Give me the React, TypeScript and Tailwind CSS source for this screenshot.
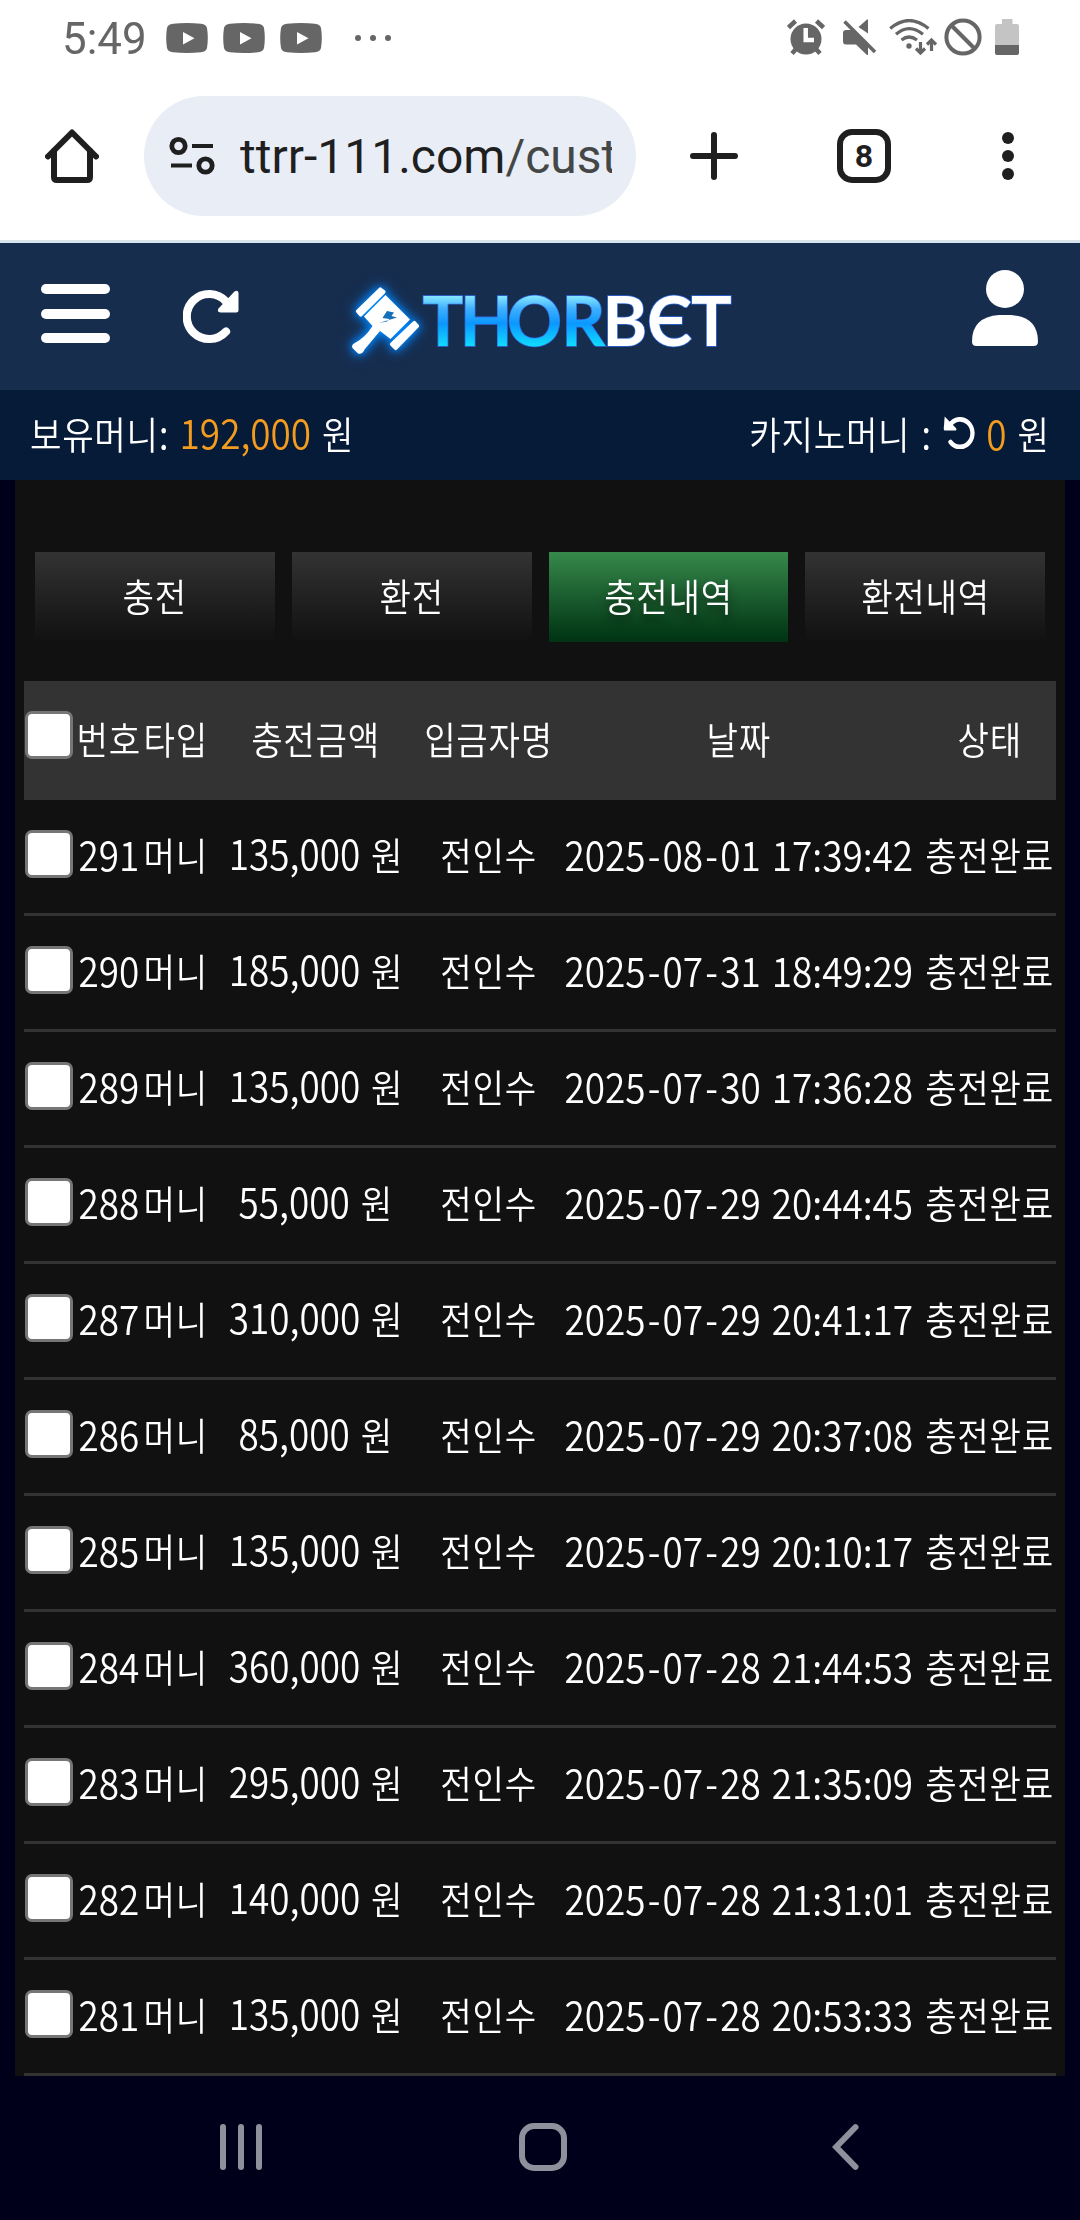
import { clsx } from "clsx";

const tabs = [
  { label: "충전", active: false },
  { label: "환전", active: false },
  { label: "충전내역", active: true },
  { label: "환전내역", active: false },
];

const columns = ["번호", "타입", "충전금액", "입금자명", "날짜", "상태"];

const deposits = [
  { no: 291, amount: "135,000", date: "2025-08-01 17:39:42" },
  { no: 290, amount: "185,000", date: "2025-07-31 18:49:29" },
  { no: 289, amount: "135,000", date: "2025-07-30 17:36:28" },
  { no: 288, amount: "55,000", date: "2025-07-29 20:44:45" },
  { no: 287, amount: "310,000", date: "2025-07-29 20:41:17" },
  { no: 286, amount: "85,000", date: "2025-07-29 20:37:08" },
  { no: 285, amount: "135,000", date: "2025-07-29 20:10:17" },
  { no: 284, amount: "360,000", date: "2025-07-28 21:44:53" },
  { no: 283, amount: "295,000", date: "2025-07-28 21:35:09" },
  { no: 282, amount: "140,000", date: "2025-07-28 21:31:01" },
  { no: 281, amount: "135,000", date: "2025-07-28 20:53:33" },
];

const rowGrid =
  "grid grid-cols-[50px_67px_67px_214px_132px_368px_134px] items-center";

// Condensed label: digits are a little larger than the Hangul next to them
function Label({ text, className }: { text: string; className?: string }) {
  const parts = text.split(/([가-힣]+|-)/).filter(Boolean);
  return (
    <span
      className={clsx(
        "inline-block whitespace-pre text-[41px] leading-[48px] [word-spacing:3px]",
        className
      )}
    >
      {parts.map((part, i) => {
        if (part === "-") {
          return (
            <span key={i} className="px-[2.5px]">
              -
            </span>
          );
        }
        if (/[가-힣]/.test(part)) {
          return (
            <span key={i} className="text-[38px] tracking-[0.8px]">
              {part}
            </span>
          );
        }
        return part;
      })}
    </span>
  );
}

function Cell({ text }: { text: string }) {
  return (
    <div className="flex min-w-0 justify-center pb-[7px] pl-[2px]">
      <Label text={text} className="scale-x-90" />
    </div>
  );
}

function Checkbox() {
  return (
    <input
      type="checkbox"
      className="ml-px block size-12 appearance-none rounded-[7px] border-[3px] border-[#767676] bg-white"
    />
  );
}

function VideoIcon() {
  return (
    <svg width="42" height="30" viewBox="0 0 42 30">
      <path
        d="M7 .8Q21-.6 35 .8Q40 1.2 41 5Q42.6 15 41 25Q40 28.8 35 29.2Q21 30.6 7 29.2Q2 28.8 1 25Q-.6 15 1 5Q2 1.2 7 .8Z"
        fill="#666"
      />
      <path d="M17 9v12.500l11.500-6.250z" fill="#fff" />
    </svg>
  );
}

function StatusBar() {
  return (
    <div className="flex h-[76px] items-center pr-[61px] pl-[62px]">
      <span className="w-[104px] origin-left scale-x-[0.975] font-[Roboto] text-[45px] leading-none text-[#666]">
        5:49
      </span>
      <div className="flex gap-[15px]">
        <VideoIcon />
        <VideoIcon />
        <VideoIcon />
      </div>
      <div className="ml-[33px] flex gap-[9px]">
        <i className="size-1.5 rounded-full bg-[#666]" />
        <i className="size-1.5 rounded-full bg-[#666]" />
        <i className="size-1.5 rounded-full bg-[#666]" />
      </div>

      <div className="ml-auto flex items-center pb-[2px]">
        {/* alarm */}
        <svg width="38" height="36" viewBox="0 0 38 36" fill="none">
          <circle cx="19" cy="20" r="15.500" fill="#666" />
          <path
            d="M1.500 8.500 8.500 2M36.500 8.500 29.500 2M9 30l-4 4.500M29 30l4 4.500"
            stroke="#666"
            strokeWidth="4.500"
          />
          <path d="M18.700 9v12h8.300" stroke="#fff" strokeWidth="4.500" />
        </svg>
        {/* muted */}
        <svg
          className="ml-[18px]"
          width="34"
          height="36"
          viewBox="0 0 34 36"
          fill="#666"
        >
          <path d="M3 11h8l14 13v12h-1L13 25.500H3Q0 25.500 0 22.500V14Q0 11 3 11ZM15.500 8 24 .5h1V14.500z" />
          <path d="M1.500 2.500 32 33" stroke="#666" strokeWidth="3.600" />
        </svg>
        {/* wifi */}
        <svg
          className="ml-[12px]"
          width="48"
          height="36"
          viewBox="0 0 48 36"
          fill="none"
          stroke="#666"
          strokeWidth="3.200"
        >
          <path d="M1.200 9.500Q20-6.500 39.500 9.500M7 15.200Q20 4 34 15.200M12.500 21Q20 15 28 21" />
          <circle cx="20" cy="27" r="2.700" fill="#666" stroke="none" />
          <path d="M31.500 23v11M27 29.500l4.500 4.500 4.500-4.500M42.500 32V21M38 25.500l4.500-4.500 4.500 4.500" />
        </svg>
        {/* do not disturb */}
        <svg
          className="ml-[7px]"
          width="38"
          height="38"
          viewBox="0 0 38 38"
          fill="none"
          stroke="#666"
          strokeWidth="4"
        >
          <circle cx="19" cy="19" r="16.600" />
          <path d="M7.500 7.500l23 23" />
        </svg>
        {/* battery */}
        <svg className="ml-[13px]" width="24" height="36" viewBox="0 0 24 36">
          <path
            d="M7 0h10.500v5H22Q24 5 24 7v19H0V7Q0 5 2 5h5z"
            fill="#c4c4c4"
          />
          <path d="M0 26h24v8Q24 36 22 36H2Q0 36 0 34z" fill="#666" />
        </svg>
      </div>
    </div>
  );
}

function BrowserBar() {
  return (
    <div className="flex h-[167px] items-center border-b-[3px] border-[#d9e3ec] pr-[66px] pb-1 pl-[45px]">
      <svg
        width="54"
        height="54"
        viewBox="0 0 54 54"
        fill="none"
        stroke="#1f1f1f"
        strokeWidth="6"
        strokeLinecap="round"
        strokeLinejoin="round"
      >
        <path d="M3 27.500 27 3.500l24 24" />
        <path d="M9 22v26q0 3 3 3h30q3 0 3-3V22" />
      </svg>

      <div className="ml-[45px] flex h-[120px] w-[492px] items-center rounded-full bg-[#e8edf6] pl-[25px]">
        <svg
          width="46"
          height="40"
          viewBox="0 0 46 40"
          fill="none"
          stroke="#1f1f1f"
          strokeWidth="4.800"
        >
          <circle cx="9.500" cy="10" r="6.700" />
          <path d="M23 10h21M2 29.500h21" strokeWidth="4.200" />
          <circle cx="36.500" cy="29.500" r="6.700" />
        </svg>
        <div className="mt-px ml-[25px] w-[372px] overflow-hidden whitespace-nowrap font-[Roboto] text-[48px] leading-[60px] text-[#1f1f1f]">
          ttrr-111.com<span className="text-[#444746]">/cust</span>
        </div>
      </div>

      <svg
        className="ml-[54px]"
        width="48"
        height="48"
        viewBox="0 0 48 48"
        stroke="#1f1f1f"
        strokeWidth="6"
        strokeLinecap="round"
      >
        <path d="M24 3v42M3 24h42" />
      </svg>
      <div className="ml-[99px] flex size-[54px] items-center justify-center rounded-[15px] border-[6px] border-[#1f1f1f] font-[Roboto] text-[32px] font-bold leading-none text-[#1f1f1f]">
        8
      </div>
      <div className="ml-auto flex flex-col gap-1.5">
        <i className="size-3 rounded-full bg-[#1f1f1f]" />
        <i className="size-3 rounded-full bg-[#1f1f1f]" />
        <i className="size-3 rounded-full bg-[#1f1f1f]" />
      </div>
    </div>
  );
}

function Logo() {
  return (
    <svg
      className="overflow-visible"
      width="400"
      height="100"
      viewBox="0 0 400 100"
    >
      <defs>
        <linearGradient
          id="ice"
          gradientUnits="userSpaceOnUse"
          x1="0"
          y1="26"
          x2="0"
          y2="76"
        >
          <stop offset="0" stopColor="#86e6ff" />
          <stop offset="0.25" stopColor="#3fb0ff" />
          <stop offset="0.55" stopColor="#0a98ff" />
          <stop offset="1" stopColor="#10dcff" />
        </linearGradient>
        <filter
          id="glow"
          x="-50%"
          y="-50%"
          width="200%"
          height="200%"
          colorInterpolationFilters="sRGB"
        >
          <feDropShadow
            dx="0"
            dy="0"
            stdDeviation="4"
            floodColor="#008cff"
            floodOpacity="1"
          />
          <feDropShadow
            dx="0"
            dy="0"
            stdDeviation="6"
            floodColor="#0080ff"
            floodOpacity="0.8"
          />
        </filter>
      </defs>
      <g filter="url(#glow)" fill="#fff">
        <path d="M49 18q1.300-1.300 2.600 0l3.400 2.600q1.300 1.300 0 2.600L32 46q-1.300 1.300-2.600 0l-3-3.500q-1.200-1.300 0-2.600z" />
        <path d="M55.500 25 80 49.500 60.500 69 50 61 34.500 79.500Q32 85 28 83.500L22.500 78Q21 75.500 24 73.500Q35 68 42.500 56L34 46.500z" />
        <path d="M83 51.500q1.300-1.300 2.600 0l3 3.200q1.300 1.300 0 2.600L67 79.500q-1.300 1.300-2.600 0l-4-4q-1.200-1.300 0-2.600z" />
      </g>
      <path
        d="M57 41l7 1.500-2.500 3.500 5.500 1.500L49 53l8-1.500 2.500-2.500-7-1z"
        fill="#1470b8"
      />
      <g
        className="font-[Lato] text-[68px] font-bold"
        stroke="#2f6be0"
        strokeWidth="1.600"
        paintOrder="stroke"
      >
        <text x="92.500 130 177 231.500" y="75.500" fill="url(#ice)">
          THOR
        </text>
        <text x="272.500 317 361" y="75.500" fill="#fff">
          BЄT
        </text>
      </g>
    </svg>
  );
}

function SiteHeader() {
  return (
    <header>
      <div className="flex h-[147px] bg-[#162d4e]">
        <div className="mt-[41px] ml-[41px] flex w-[69px] flex-col gap-[14.5px]">
          <i className="h-[10px] rounded-[5px] bg-white" />
          <i className="h-[10px] rounded-[5px] bg-white" />
          <i className="h-[10px] rounded-[5px] bg-white" />
        </div>
        <svg
          className="mt-[45px] ml-[73px]"
          width="56"
          height="56"
          viewBox="0 0 56 56"
          fill="none"
        >
          <path
            d="M43 13.500A22.500 22.500 0 1 0 43 43.500"
            stroke="#fff"
            strokeWidth="8.200"
            strokeLinecap="round"
          />
          <path
            d="M51.500 3.500Q55 1.500 55.500 5v17q0 2.500-2.500 2.500H37.500q-4-.5-2-4z"
            fill="#fff"
          />
        </svg>
        <div className="mt-[27px] ml-[91px]">
          <Logo />
        </div>
        <svg
          className="mt-[27px] mr-[42px] ml-auto"
          width="66"
          height="77"
          viewBox="0 0 66 77"
          fill="#fff"
        >
          <circle cx="33" cy="19" r="19" />
          <path d="M27 45h12q27 2 27 26.500 0 4.500-4.500 4.500h-57Q0 76 0 71.500 0 47 27 45z" />
        </svg>
      </div>

      <div className="flex h-[90px] items-center justify-between bg-[#061b38] pr-[30px] pb-[7px] pl-[30px]">
        <div className="flex origin-left scale-x-90 whitespace-pre">
          <Label text="보유머니: " />
          <Label className="text-[#f39c1f]" text="192,000" />
          <Label text=" 원" />
        </div>
        <div className="flex origin-right scale-x-90 items-center whitespace-pre">
          <Label text="카지노머니 : " />
          <svg width="37" height="34" viewBox="0 0 34 34" fill="none">
            <path
              d="M7.500 10A13.800 13.800 0 1 1 8 27"
              stroke="#fff"
              strokeWidth="4.800"
              strokeLinecap="round"
            />
            <path
              d="M1.500 1.500.5 14q0 1.500 1.500 1.500h11.500q2-.5.500-2.500z"
              fill="#fff"
            />
          </svg>
          <Label className="ml-3 text-[#f39c1f]" text="0" />
          <Label text=" 원" />
        </div>
      </div>
    </header>
  );
}

function NavigationBar() {
  return (
    <nav className="flex h-36 items-center pb-[2px] pl-[220px]">
      <div className="flex gap-3">
        <i className="h-[46px] w-1.5 rounded-full bg-[#908f9c]" />
        <i className="h-[46px] w-1.5 rounded-full bg-[#908f9c]" />
        <i className="h-[46px] w-1.5 rounded-full bg-[#908f9c]" />
      </div>
      <div className="ml-[257px] size-12 rounded-[15px] border-[6px] border-[#908f9c]" />
      <svg
        className="ml-[265px]"
        width="28"
        height="46"
        viewBox="0 0 28 46"
        fill="none"
        stroke="#908f9c"
        strokeWidth="6"
        strokeLinecap="round"
      >
        <path d="M23.500 3.200 4.200 23l19.300 19.800" />
      </svg>
    </nav>
  );
}

export default function App() {
  return (
    <div className="h-[2220px] w-[1080px] overflow-hidden bg-[#00001b] font-['Noto_Sans_CJK_KR',sans-serif] font-[350] text-white">
      <div className="bg-white font-normal">
        <StatusBar />
        <BrowserBar />
      </div>
      <SiteHeader />

      <main className="mx-[15px] h-[1596px] bg-[#111] px-[9px] pt-[72px]">
        <div className="mx-[11px] grid grid-cols-4 gap-[17px]">
          {tabs.map((tab) => (
            <button
              key={tab.label}
              className={clsx(
                "flex h-[90px] items-center justify-center bg-linear-to-b pb-[7px]",
                tab.active
                  ? "from-[#37894c] to-[#003313] [text-shadow:0_6px_9px_rgba(0,0,0,0.5)]"
                  : "from-[#333] to-[#111]"
              )}
            >
              <Label text={tab.label} className="scale-x-90" />
            </button>
          ))}
        </div>

        <div className="mt-[39px]">
          <div className={clsx(rowGrid, "h-[119px] bg-[#333]")}>
            <div className="-mt-3">
              <Checkbox />
            </div>
            {columns.map((column) => (
              <Cell key={column} text={column} />
            ))}
          </div>
          {deposits.map((d) => (
            <div
              key={d.no}
              className={clsx(rowGrid, "h-[116px] border-b-[3px] border-[#333]")}
            >
              <div className="-mt-[5px]">
                <Checkbox />
              </div>
              <Cell text={String(d.no)} />
              <Cell text="머니" />
              <Cell text={`${d.amount} 원`} />
              <Cell text="전인수" />
              <Cell text={d.date} />
              <Cell text="충전완료" />
            </div>
          ))}
        </div>
      </main>

      <NavigationBar />
    </div>
  );
}
